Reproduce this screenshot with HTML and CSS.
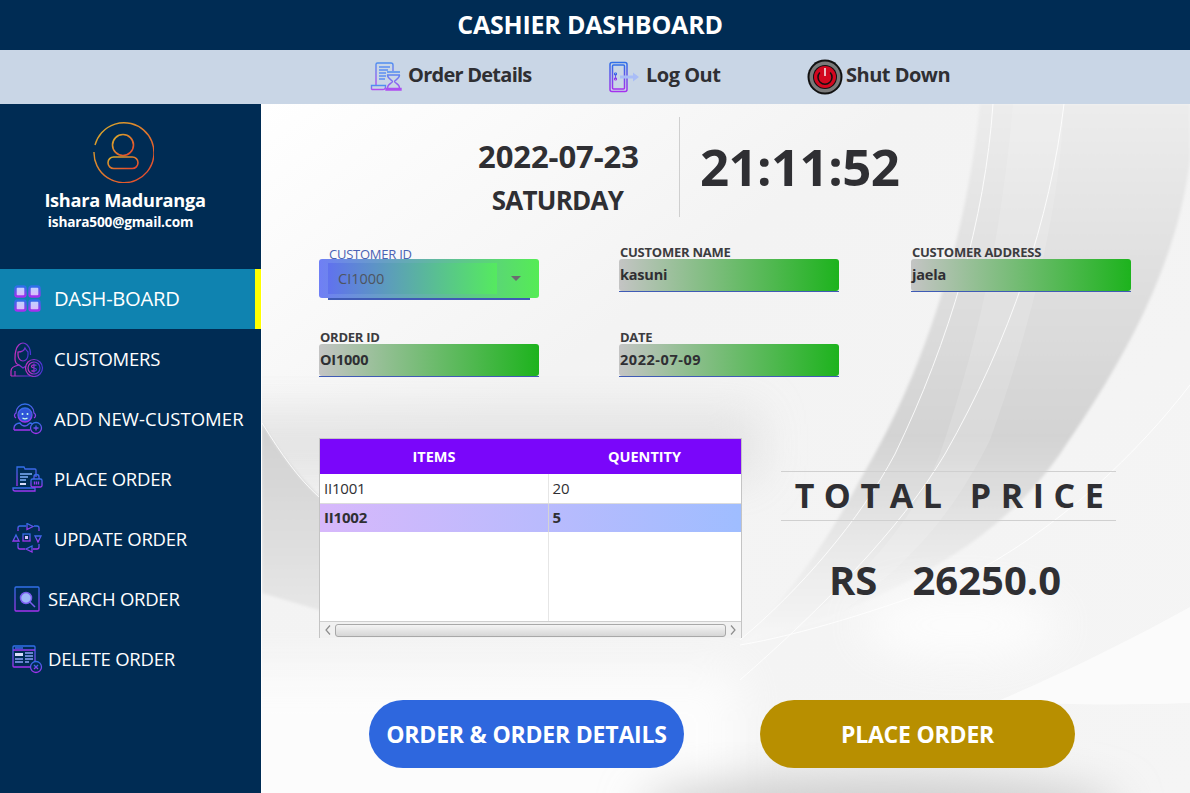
FILE: index.html
```html
<!DOCTYPE html>
<html lang="en">
<head>
    <meta charset="UTF-8">
    <meta name="viewport" content="width=device-width, initial-scale=1.0">
    <title>Cashier Dashboard</title>
    <link rel="stylesheet" href="styles.css">
</head>
<body>

    <svg class="defs" width="0" height="0">
        <defs>
            <linearGradient id="bp" x1="0" y1="0" x2="0" y2="1">
                <stop offset="0" stop-color="#2f6fe8"/>
                <stop offset="1" stop-color="#a431ee"/>
            </linearGradient>
            <linearGradient id="pb" x1="0" y1="0" x2="1" y2="0">
                <stop offset="0" stop-color="#c62fc0"/>
                <stop offset="1" stop-color="#4a35d8"/>
            </linearGradient>
            <linearGradient id="lite" x1="0" y1="0" x2="0" y2="1">
                <stop offset="0" stop-color="#4f8ef0"/>
                <stop offset="1" stop-color="#b04df0"/>
            </linearGradient>
            <linearGradient id="sun" x1="0" y1="0" x2="1" y2="1">
                <stop offset="0" stop-color="#d8b02c"/>
                <stop offset="1" stop-color="#e8402c"/>
            </linearGradient>
            <linearGradient id="tile" x1="0" y1="0" x2="0" y2="1">
                <stop offset="0" stop-color="#bcd4ff"/>
                <stop offset="1" stop-color="#e0b8fb"/>
            </linearGradient>
        </defs>
    </svg>

    <header class="title-bar">CASHIER DASHBOARD</header>

    <nav class="tool-bar">
        <a class="tool tool-details">
            <svg width="32" height="32" viewBox="0 0 32 32" fill="none" stroke="url(#lite)" stroke-width="1.400">
                <path d="M6 24V3.500A1.500 1.500 0 0 1 7.500 2H21a2 2 0 0 1 2 2v6"/>
                <path d="M9 6h11M9 9h9M9 12h7M9 15h7M9 18h6" stroke="#5b8ef2"/>
                <path d="M1.500 24.500h14v1.500a2.500 2.500 0 0 1-2.500 2.500H2a1 1 0 0 1-.500-1z"/>
                <path d="M17 11h13M17 14h13M17.500 14c0 4 5 5 5 6.500 0 1.500-5 2.500-5 6.500M29.500 14c0 4-5 5-5 6.500 0 1.500 5 2.500 5 6.500M16 27.500h15v1.500H16z"/>
            </svg>
            <span>Order Details</span>
        </a>
        <a class="tool tool-logout">
            <svg width="32" height="32" viewBox="0 0 32 32" fill="none" stroke="url(#bp)" stroke-width="1.500">
                <rect x="2" y="1.500" width="17" height="29" rx="2"/>
                <rect x="4.500" y="4" width="12" height="24" rx="1"/>
                <path d="M7.500 13v5M6.500 12h2v2h-2zM6.500 17h2v2h-2z" stroke-width="1"/>
                <path d="M12 14.500h13v-3l6 4.500-6 4.500v-3H12z" fill="#a9bdf7" stroke="none"/>
            </svg>
            <span>Log Out</span>
        </a>
        <a class="tool tool-power">
            <svg width="36" height="36" viewBox="0 0 36 36">
                <circle cx="18" cy="18" r="17.500" fill="#111"/>
                <circle cx="18" cy="18" r="15.500" fill="#7a7a7a"/>
                <circle cx="18" cy="18" r="12" fill="#111"/>
                <circle cx="18" cy="18" r="11" fill="#d3071f"/>
                <path d="M12.800 13.500a7 7 0 1 0 10.400 0" fill="none" stroke="#111" stroke-width="1.500"/>
                <path d="M18 9v8" stroke="#f4f4f4" stroke-width="1.500"/>
            </svg>
            <span>Shut Down</span>
        </a>
    </nav>

    <div class="layout">
        <aside class="sidebar">
            <div class="profile">
                <svg class="avatar" width="62" height="62" viewBox="0 0 62 62" fill="none" stroke="url(#sun)" stroke-width="1.400">
                    <path d="M3 24A30 30 0 1 1 2 31"/>
                    <circle cx="31" cy="24" r="10.500" stroke-width="1.600"/>
                    <rect x="16" y="36" width="30" height="11.500" rx="5.700" stroke-width="1.600"/>
                </svg>
                <div class="profile-name">Ishara Maduranga</div>
                <div class="profile-mail">ishara500@gmail.com</div>
            </div>

            <ul class="menu">
                <li class="menu-item active">
                    <svg class="icon" width="34" height="30" viewBox="0 0 34 30">
                        <g fill="url(#tile)" stroke="url(#bp)" stroke-width="2.400">
                            <rect x="5.500" y="2.500" width="10" height="10" rx="2"/>
                            <rect x="19.500" y="2.500" width="10" height="10" rx="2"/>
                            <rect x="5.500" y="16.500" width="10" height="10" rx="2"/>
                            <rect x="19.500" y="16.500" width="10" height="10" rx="2"/>
                        </g>
                    </svg>
                    <span>DASH-BOARD</span>
                </li>
                <li class="menu-item">
                    <svg class="icon" width="34" height="36" viewBox="0 0 34 36" fill="none" stroke="url(#pb)" stroke-width="1.200">
                        <path d="M9 24c-3-1-4-3-4-6 0-2 0-6 1-9 1-4 4-7 7-7s6 3 7 7c.500 2 .500 3 .500 5"/>
                        <path d="M8 11c3 0 6-1 7-4 1 2 2 3 3 4v3c0 3-2 6-5 6s-5-3-5-6z"/>
                        <path d="M1 35v-5c0-3 3-5 8-6l4 3 3-2M5 30v5M1 35h19"/>
                        <circle cx="24" cy="27" r="8.500"/>
                        <circle cx="24" cy="27" r="6"/>
                        <path d="M26.500 24.500c-1-1-5-1-5 1s5 1 5 3-4 2-5 1M24 22.500v9"/>
                    </svg>
                    <span>CUSTOMERS</span>
                </li>
                <li class="menu-item wide">
                    <svg class="icon" width="34" height="32" viewBox="0 0 34 32" fill="none" stroke="url(#bp)" stroke-width="1.300">
                        <path d="M6 15c-2-1-2-4 0-5 0-5 4-9 9-9s9 4 9 9c2 1 2 4 0 5"/>
                        <circle cx="15" cy="12" r="7" fill="#2f55d8"/>
                        <circle cx="12.500" cy="11" r="1" fill="#cfe" stroke="none"/>
                        <circle cx="17.500" cy="11" r="1" fill="#cfe" stroke="none"/>
                        <path d="M12.500 15c1.500 1 3.500 1 5 0" stroke="#cfe"/>
                        <path d="M4 27v-2c0-3 3-5 6-5 1 2 3 3 5 3s3-1 5-3c1 0 2 .500 3 1M4 27h16"/>
                        <circle cx="26" cy="25" r="5.500"/>
                        <path d="M26 22.500v5M23.500 25h5"/>
                    </svg>
                    <span>ADD NEW-CUSTOMER</span>
                </li>
                <li class="menu-item">
                    <svg class="icon" width="34" height="30" viewBox="0 0 34 30" fill="none" stroke="url(#bp)" stroke-width="1.300">
                        <path d="M7 22V3h7l1 2h10a1 1 0 0 1 1 1v7"/>
                        <path d="M7 6h19"/>
                        <path d="M10 10h12M10 13h8M10 16h6" stroke="#7fb0fa"/>
                        <path d="M10 20h6" stroke="#d9dcfb" stroke-width="2"/>
                        <path d="M3 24h22v3H5a2 2 0 0 1-2-2z"/>
                        <rect x="21" y="15" width="11" height="8" rx="1.500" fill="#002c54"/>
                        <path d="M24 15v-2a2.500 2.500 0 0 1 5 0v2M24.500 17.500v3M26.500 17.500v3M28.500 17.500v3"/>
                    </svg>
                    <span>PLACE ORDER</span>
                </li>
                <li class="menu-item">
                    <svg class="icon" width="34" height="32" viewBox="0 0 34 32" fill="none" stroke="url(#bp)" stroke-width="1.300">
                        <path d="M8 8V5a2 2 0 0 1 2-2h6M24 3h3a2 2 0 0 1 2 2v3"/>
                        <path d="M17 .500l6 3-6 3z"/>
                        <path d="M8 20v4a2 2 0 0 0 2 2h5M23 26h4a2 2 0 0 0 2-2v-3"/>
                        <path d="M22 23v6l-6-3z"/>
                        <path d="M6 12l3 6H3zM28 19l-3-6h6z"/>
                        <rect x="13" y="11" width="7" height="7"/>
                        <rect x="15" y="13" width="3" height="3" fill="#d9c4fb" stroke="none"/>
                    </svg>
                    <span>UPDATE ORDER</span>
                </li>
                <li class="menu-item narrow">
                    <svg class="icon" width="34" height="28" viewBox="0 0 34 28" fill="none" stroke="url(#bp)" stroke-width="1.300">
                        <rect x="5" y="2" width="24" height="24" rx="1"/>
                        <circle cx="16" cy="13" r="5.500" fill="#9db8f8" stroke="#7a5df0" stroke-width="1.500"/>
                        <path d="M20 17l5 5" stroke="#7a5df0" stroke-width="1.500"/>
                    </svg>
                    <span>SEARCH ORDER</span>
                </li>
                <li class="menu-item narrow">
                    <svg class="icon" width="34" height="30" viewBox="0 0 34 30" fill="none" stroke="url(#bp)" stroke-width="1.300">
                        <rect x="3" y="2" width="22" height="21" rx="1"/>
                        <path d="M3 6h22M5 4h8"/>
                        <path d="M5 9h8v3H5z" fill="#d9dcfb" stroke="none"/>
                        <path d="M15 9h8M15 12h8M15 15h8M5 15h8M5 18h8M15 18h4" stroke="#8aa0f8"/>
                        <circle cx="26" cy="23" r="5.500" fill="#002c54"/>
                        <path d="M24 21l4 4M28 21l-4 4"/>
                    </svg>
                    <span>DELETE ORDER</span>
                </li>
            </ul>
        </aside>

        <main class="content">
            <!-- backdrop swirl, viewBox is in page coordinates -->
            <svg class="backdrop" viewBox="262 104 928 689" preserveAspectRatio="none">
                <defs>
                    <filter id="soft" x="-30%" y="-50%" width="160%" height="200%"><feGaussianBlur stdDeviation="22"/></filter>
                    <filter id="edge" x="-10%" y="-10%" width="120%" height="120%"><feGaussianBlur stdDeviation="1.500"/></filter>
                    <linearGradient id="baseFill" x1="0" y1="0" x2="1" y2="1">
                        <stop offset="0" stop-color="#ffffff"/>
                        <stop offset=".35" stop-color="#f3f3f3"/>
                        <stop offset="1" stop-color="#f5f5f5"/>
                    </linearGradient>
                    <linearGradient id="bandFill" x1="0" y1="104" x2="0" y2="640" gradientUnits="userSpaceOnUse">
                        <stop offset="0" stop-color="#ececec"/>
                        <stop offset=".35" stop-color="#dedede"/>
                        <stop offset=".62" stop-color="#d3d3d3"/>
                        <stop offset=".82" stop-color="#e8e8e8"/>
                        <stop offset="1" stop-color="#f6f6f6"/>
                    </linearGradient>
                    <linearGradient id="leftFill" x1="0" y1="423" x2="0" y2="610" gradientUnits="userSpaceOnUse">
                        <stop offset="0" stop-color="#d0d0d0"/>
                        <stop offset="1" stop-color="#e6e6e6"/>
                    </linearGradient>
                </defs>
                <rect x="262" y="104" width="928" height="689" fill="url(#baseFill)"/>
                <path d="M980 104C965 250 920 380 860 480C820 555 780 605 740 645C900 600 1000 540 1060 454C1110 380 1175 280 1190 160V104Z" fill="url(#bandFill)" filter="url(#edge)"/>
                <path d="M1013 104C1000 250 975 350 940 454C910 530 850 590 790 630L830 620C920 560 960 500 990 440C1030 330 1060 210 1064 104Z" fill="#fff" opacity=".14"/>
                <path d="M180 410H760V480H180Z" fill="#e0e0e0" opacity=".8" filter="url(#soft)"/>
                <path d="M262 423C300 490 360 540 460 590V625L319 610L262 593Z" fill="url(#leftFill)" filter="url(#edge)"/>
                <path d="M200 670H740V840H200Z" fill="#fff" opacity=".75" filter="url(#soft)"/>
                <ellipse cx="960" cy="625" rx="100" ry="35" fill="#fff" opacity=".8" filter="url(#soft)"/>
                <ellipse cx="880" cy="810" rx="240" ry="34" fill="#cecece" filter="url(#soft)"/>
                <path d="M1000 700C1070 670 1130 640 1190 607V703C1100 706 1040 704 1000 700Z" fill="#fff" opacity=".6"/>
                <g fill="none" stroke="#fff" stroke-width="1" opacity=".85">
                    <path d="M993 104C985 220 950 340 895 454C860 520 800 590 740 640"/>
                    <path d="M1064 104C1050 220 1010 340 945 454C900 530 820 610 740 680"/>
                    <path d="M1190 385C1140 450 1060 530 960 580C880 610 800 635 740 645"/>
                    <path d="M262 423C282 455 298 478 319 497"/>
                </g>
            </svg>

            <section class="clock">
                <div class="clock-date">
                    <div class="date-value">2022-07-23</div>
                    <div class="date-day">SATURDAY</div>
                </div>
                <div class="clock-time">21:11:52</div>
            </section>

            <section class="fields">
                <div class="field combo">
                    <label class="combo-label">CUSTOMER ID</label>
                    <div class="combo-box">
                        <div class="combo-value">CI1000</div>
                        <span class="combo-arrow"></span>
                    </div>
                    <div class="combo-line"></div>
                </div>
                <div class="field">
                    <label>CUSTOMER NAME</label>
                    <div class="field-value">kasuni</div>
                </div>
                <div class="field">
                    <label>CUSTOMER ADDRESS</label>
                    <div class="field-value">jaela</div>
                </div>
                <div class="field">
                    <label>ORDER ID</label>
                    <div class="field-value">OI1000</div>
                </div>
                <div class="field">
                    <label>DATE</label>
                    <div class="field-value digits">2022-07-09</div>
                </div>
            </section>

            <section class="summary">
                <div class="table-wrap">
                    <table class="items">
                        <thead>
                            <tr><th>ITEMS</th><th>QUENTITY</th></tr>
                        </thead>
                        <tbody>
                            <tr><td>II1001</td><td>20</td></tr>
                            <tr class="selected"><td>II1002</td><td>5</td></tr>
                            <tr class="filler"><td></td><td></td></tr>
                        </tbody>
                    </table>
                    <div class="scroll">
                        <svg width="14" height="16" viewBox="0 0 14 16" fill="none" stroke="#8d8d8d" stroke-width="1.200"><path d="M9 3.500L5 8l4 4.500"/></svg>
                        <div class="scroll-thumb"></div>
                        <svg width="14" height="16" viewBox="0 0 14 16" fill="none" stroke="#8d8d8d" stroke-width="1.200"><path d="M5 3.500L9 8l-4 4.500"/></svg>
                    </div>
                </div>
                <div class="total">
                    <div class="total-title">TOTAL PRICE</div>
                    <div class="total-value"><span>RS</span><span>26250.0</span></div>
                </div>
            </section>

            <section class="actions">
                <button class="btn btn-blue">ORDER &amp; ORDER DETAILS</button>
                <button class="btn btn-gold">PLACE ORDER</button>
            </section>
        </main>
    </div>

</body>
</html>
```

FILE: styles.css
```css
* { box-sizing: border-box; }
html, body { margin: 0; height: 793px; overflow: hidden; }
body { font-family: "Open Sans", "Noto Sans", sans-serif; color: #2f2f33; }
.defs { position: absolute; }

.title-bar { height: 50px; background: #002c54; color: #fff; font-size: 25px; font-weight: 700; line-height: 48px; text-align: center; letter-spacing: -0.200px; padding-right: 10px; }

.tool-bar { height: 54px; background: #c9d6e6; display: flex; align-items: center; padding-left: 370px; padding-bottom: 1px; }
.tool { display: flex; align-items: center; font-size: 20px; font-weight: 700; color: #2f2f33; letter-spacing: -0.500px; }
.tool span { margin-top: -4px; }
.tool-details { gap: 6px; width: 238px; letter-spacing: -0.750px; }
.tool-logout { gap: 6px; width: 199px; }
.tool-power { gap: 3px; }

.layout { display: flex; height: 689px; }

.sidebar { width: 261px; background: #002c54; color: #fff; }
.profile { height: 165px; padding-top: 17px; display: flex; flex-direction: column; align-items: center; }
.avatar { margin-left: -15px; }
.profile-name { font-size: 18.200px; font-weight: 700; margin-top: 5px; margin-left: -11px; line-height: 24px; letter-spacing: -0.300px; }
.profile-mail { font-size: 13.700px; font-weight: 700; line-height: 20px; margin-left: -20px; letter-spacing: -0.200px; }

.menu { list-style: none; margin: 0; padding: 0; }
.menu-item { height: 60px; display: flex; align-items: center; gap: 10px; padding-left: 10px; padding-bottom: 2px; font-size: 18.500px; letter-spacing: -0.250px; }
.menu-item .icon { margin-top: 2px; }
.menu-item.wide { letter-spacing: 0.050px; }
.menu-item.narrow { gap: 4px; }
.menu-item.active { background: #0f83b0; border-right: 6px solid #ffff00; font-size: 20.200px; letter-spacing: -0.300px; }
.icon { flex: none; }

.content { flex: 1; position: relative; padding-left: 57px; overflow: hidden; margin-left: 1px; background: #fff; }
.backdrop { position: absolute; top: 0; left: 0; width: 100%; height: 100%; }
.content > section { position: relative; }

.clock { display: flex; height: 100px; margin-top: 13px; }
.clock-date { width: 418px; margin-left: -57px; padding-left: 176px; border-right: 1px solid #cfcfcf; text-align: center; }
.date-value { font-size: 31px; font-weight: 700; line-height: 40px; margin-top: 19px; letter-spacing: -0.100px; }
.date-day { font-size: 26px; font-weight: 700; line-height: 34px; margin-top: 7px; letter-spacing: -0.750px; padding-right: 2px; }
.clock-time { font-size: 51px; font-weight: 700; line-height: 100px; margin-left: 20px; margin-top: -1px; letter-spacing: -0.600px; }

.fields { display: grid; grid-template-columns: 300px 292px 220px; row-gap: 45px; margin-top: 26px; }
.field { width: 220px; height: 40px; }
.field label { display: block; font-size: 13px; font-weight: 700; line-height: 18px; height: 16px; color: #3c3c40; letter-spacing: -0.250px; padding-left: 1px; }
.field-value { position: relative; height: 32px; background: linear-gradient(90deg, #c4c4c4, #1db31d); border-radius: 3px; font-size: 14.500px; font-weight: 700; line-height: 32px; padding-left: 1px; letter-spacing: -0.200px; }
.field-value::after { content: ""; position: absolute; left: 0; right: 0; bottom: -1px; height: 1px; background: #3f5bb5; }
.field-value.digits { letter-spacing: 0.550px; }

.combo { position: relative; }
.field .combo-label { font-weight: 400; color: #4a62b4; padding-left: 10px; margin-top: 2px; }
.combo-box { position: absolute; left: 0; top: 16px; width: 220px; height: 39px; border-radius: 3px; background: linear-gradient(90deg, #6f7ff5, #55ec55); display: flex; align-items: center; }
.combo-value { margin-left: 9px; width: 169px; height: 31px; background: linear-gradient(90deg, #6072ee, #55ea5f); color: #4e5560; font-size: 14.500px; line-height: 31px; padding-left: 10px; }
.combo-arrow { margin-left: 14px; border: 5px solid transparent; border-top: 5px solid #6b6b70; border-bottom: 0; }
.combo-line { position: absolute; left: 9px; top: 55px; width: 202px; height: 2px; background: #3f5bb5; }

.summary { display: flex; margin-top: 70px; }
.table-wrap { width: 423px; height: 200px; border: 1px solid #c4c4c4; background: #fff; flex: none; }
.items { width: 100%; height: 182px; border-collapse: collapse; table-layout: fixed; font-size: 15px; }
.items th { height: 35px; background: #7a06fa; color: #fff; font-size: 14.500px; font-weight: 700; }
.items th:first-child { width: 228px; }
.items td { height: 29px; padding: 0 4px 1px; border-bottom: 1px solid #dcdcdc; border-right: 1px solid #e6e6e6; letter-spacing: -0.200px; }
.items td:last-child { border-right: none; }
.selected { background: linear-gradient(90deg, #d7b8fb, #9fbdff); font-weight: 700; }
.selected td { border-bottom: none; border-right-color: #d4d4d4; }
.items .filler td { height: auto; border-bottom: none; }
.scroll { height: 17px; display: flex; align-items: center; background: #f1f1f1; border-top: 1px solid #cfcfcf; padding: 0 1px; }
.scroll-thumb { flex: 1; height: 13px; border: 1px solid #a8a8a8; border-radius: 3px; background: linear-gradient(#f4f4f4, #d6d6d6); }

.total { width: 335px; margin-left: 39px; margin-top: 33px; }
.total-title { height: 50px; border-top: 1px solid #d0d0d0; border-bottom: 1px solid #d0d0d0; font-size: 34px; font-weight: 700; line-height: 47px; letter-spacing: 9.550px; white-space: pre; text-align: center; word-spacing: 0; padding-left: 11px; }
.total-value { display: flex; justify-content: center; gap: 35px; margin-top: 34px; padding-right: 7px; font-size: 40px; font-weight: 700; line-height: 50px; }

.actions { display: flex; gap: 76px; margin-top: 62px; padding-left: 50px; }
.btn { width: 315px; height: 68px; border: none; border-radius: 34px; color: #fff; font-family: inherit; font-size: 23px; font-weight: 700; letter-spacing: -0.200px; }
.btn-blue { background: #2e67de; }
.btn-gold { background: #b88f00; }
```
